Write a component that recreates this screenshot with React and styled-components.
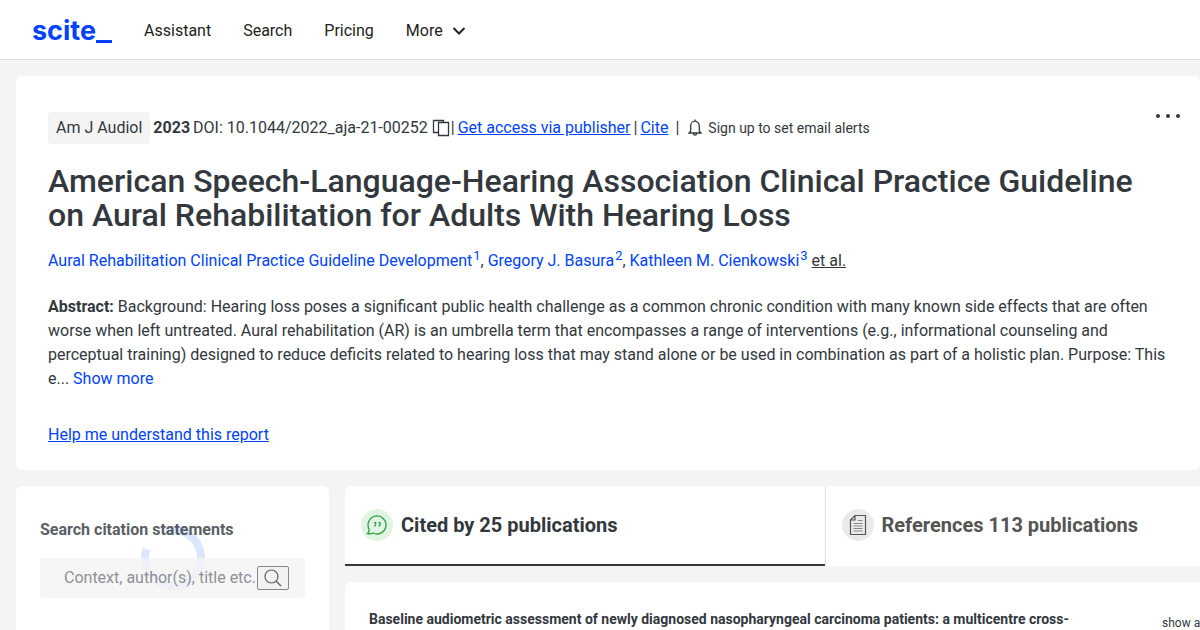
import styled, { createGlobalStyle } from "styled-components"

const GlobalStyle = createGlobalStyle`
    * { box-sizing: border-box; }
    body {
        margin: 0;
        background: #f4f4f4;
        color: #32383e;
        font: 16px/24px Roboto, "Liberation Sans", sans-serif;
        overflow-x: hidden;
    }
    button, input { font: inherit; color: inherit; }
`

const Header = styled.header`
    display: flex;
    align-items: center;
    gap: 32px;
    height: 60px;
    padding: 2px 32px 0;
    background: #fff;
    border-bottom: 1px solid #d9d9d9;
`

const Logo = styled.a`
    display: flex;
    align-items: flex-end;
    color: #0043ff;
    font: 700 27px/32px Inter, sans-serif;
    text-decoration: none;
`

const LogoBar = styled.span`
    width: 16px;
    height: 3px;
    margin-bottom: 4px;
    background: #0043ff;
`

const Nav = styled.nav`
    display: flex;
    gap: 32px;
    color: #222;
`

const NavLink = styled.a`
    color: inherit;
    text-decoration: none;
`

const MoreButton = styled.button`
    display: flex;
    align-items: center;
    gap: 9px;
    padding: 0;
    border: 0;
    background: none;
`

const Main = styled.main`
    display: flex;
    flex-direction: column;
    gap: 16px;
    padding: 16px 0 0 16px;
`

const Card = styled.section`
    background: #fff;
    border-radius: 6px;
`

const Article = styled(Card)`
    padding: 36px 32px 23px;
`

const TopRow = styled.div`
    display: flex;
    align-items: flex-start;
    justify-content: space-between;
`

const Meta = styled.div`
    display: flex;
    align-items: center;
    gap: 3px;
    white-space: nowrap;
`

const Journal = styled.span`
    padding: 4px 8px;
    border-radius: 4px;
    background: #f4f4f4;
`

const Link = styled.a`
    color: #0043ff;
    text-decoration: ${(props) => (props.$plain ? "none" : "underline")};
`

const IconButton = styled.button`
    display: flex;
    align-items: center;
    padding: 0;
    border: 0;
    background: none;
`

const CopyButton = styled(IconButton)`
    margin-left: 1px;
    margin-right: -2px;
`

const AlertButton = styled(IconButton)`
    gap: 6px;
    margin-left: 6px;
    font-size: 14px;
`

const Dots = styled(IconButton)`
    margin-right: -12px;
    height: 8px;
`

const Title = styled.h1`
    margin: 20px 0 17px;
    font-size: 32px;
    line-height: 34px;
    font-weight: 500;
`

const Authors = styled.p`
    margin: 0;
    & sup {
        margin-left: 1px;
        font-size: 13px;
        line-height: 0;
        vertical-align: 6px;
    }
`

const EtAl = styled.a`
    color: inherit;
`

const Abstract = styled.p`
    margin: 22px 0 32px;
`

const Columns = styled.div`
    display: flex;
    gap: 16px;
    align-items: flex-start;
`

const Sidebar = styled(Card)`
    position: relative;
    flex: 0 0 313px;
    min-width: 0;
    padding: 32px 24px;
    min-height: 320px;
`

const Spinner = styled.svg`
    position: absolute;
    top: 40px;
    left: calc(50% - 32px);
`

const SearchForm = styled.form`
    position: relative;
    opacity: 0.8;
`

const SearchLabel = styled.label`
    display: block;
    margin-bottom: 16px;
    font-weight: 700;
`

const SearchBox = styled.div`
    display: flex;
    align-items: center;
    height: 40px;
    padding: 0 16px 0 24px;
    border-radius: 4px;
    background: #f4f4f4;
`

const SearchInput = styled.input`
    flex: 1;
    min-width: 0;
    padding: 0;
    border: 0;
    outline: 0;
    background: none;
    &::placeholder {
        color: #75757f;
        opacity: 1;
    }
`

const SearchButton = styled.button`
    display: flex;
    align-items: center;
    justify-content: center;
    width: 32px;
    height: 24px;
    padding: 0;
    border: 1px solid #6b6b6b;
    border-radius: 2px;
    background: #efefef;
`

const Results = styled.div`
    flex: 0 0 80vw;
    display: flex;
    flex-direction: column;
    gap: 16px;
`

const Tabs = styled.div`
    display: flex;
    background: #fff;
    border-radius: 6px 6px 0 0;
`

const Tab = styled.button`
    flex: 1 1 0;
    display: flex;
    align-items: center;
    gap: 8px;
    height: 80px;
    padding: 0 16px;
    border: 0;
    border-left: ${(props) => (props.$active ? "0" : "1px solid #dedede")};
    border-bottom: 2px solid ${(props) => (props.$active ? "#32383e" : "transparent")};
    background: none;
    color: ${(props) => (props.$active ? "#32383e" : "#555")};
    font-size: 20px;
    font-weight: 700;
`

const Badge = styled.span`
    display: flex;
    align-items: center;
    justify-content: center;
    width: 32px;
    height: 32px;
    border-radius: 50%;
    background: ${(props) => props.$color};
`

const Result = styled(Card)`
    display: flex;
    gap: 88px;
    padding: 25px 24px;
`

const ResultTitle = styled.h2`
    flex: 0 0 705px;
    margin: 0;
    font-size: 14px;
    line-height: 24px;
    font-weight: 700;
`

const ShowAbstract = styled(IconButton)`
    height: 32px;
    font-size: 12px;
    white-space: nowrap;
`

const Chevron = () => (
    <svg width="14" height="8" viewBox="0 0 14 8" fill="none" stroke="#222" strokeWidth="2">
        <path d="M1.5 1 7 6.5 12.5 1" />
    </svg>
)

const CopyIcon = () => (
    <svg width="18" height="18" viewBox="0 0 18 18" fill="none" stroke="currentColor" strokeWidth="1.3">
        <path d="M6.5 13.5H1.5V1.5H11.5V4M6.5 3.5H16.5V16.5H6.5Z" />
    </svg>
)

const BellIcon = () => (
    <svg width="14" height="18" viewBox="0 0 14 18" fill="none" stroke="currentColor" strokeWidth="1.3">
        <path d="M7 .5V2M2.7 12V7a4.3 4.8 0 0 1 8.6 0v5l1.7 2H1Z M5.5 14.5a1.5 1.7 0 0 0 3 0" />
    </svg>
)

const SearchIcon = () => (
    <svg width="18" height="18" viewBox="0 0 18 18" fill="none" stroke="#32383e" strokeWidth="1.2">
        <circle cx="7.5" cy="7.5" r="6.5" />
        <path d="m12 12 5 5" />
    </svg>
)

const QuoteIcon = () => (
    <svg width="22" height="22" viewBox="0 0 22 22" fill="none" stroke="#2f9e44" strokeWidth="1.3">
        <path d="M3.2 15.4A9 9 0 1 1 7 19Q4.500 20.300 1.500 19.500 3.200 18 3.200 15.400Z" />
        <path d="M8 8.600h1.600v1.700L8.600 12.500M12.400 8.600H14v1.700L13 12.500" />
    </svg>
)

const PaperIcon = () => (
    <svg width="18" height="22" viewBox="0 0 18 22" fill="none" stroke="#555" strokeWidth="1.2">
        <path d="M6 1.5H16.5V20.5H1.5V6ZM6 1.5V6H1.5" />
        <path stroke="#888" d="M9 6.5h4.500M4.500 9.500h9M4.500 12h9M4.500 14.500h9M4.500 17h9" />
    </svg>
)

const App = () => {
    return (
        <>
        <GlobalStyle />
        <Header>
            <Logo href="#" aria-label="scite_">scite<LogoBar /></Logo>
            <Nav>
                <NavLink href="#">Assistant</NavLink>
                <NavLink href="#">Search</NavLink>
                <NavLink href="#">Pricing</NavLink>
                <MoreButton>More <Chevron /></MoreButton>
            </Nav>
        </Header>
        <Main>
            <Article>
                <TopRow>
                    <Meta>
                        <Journal>Am J Audiol</Journal>
                        <strong>2023</strong>
                        <span>DOI: 10.1044/2022_aja-21-00252</span>
                        <CopyButton aria-label="Copy DOI"><CopyIcon /></CopyButton>
                        <span>|</span>
                        <Link href="#">Get access via publisher</Link>
                        <span>|</span>
                        <Link href="#">Cite</Link>
                        <span>&nbsp;|</span>
                        <AlertButton><BellIcon /> Sign up to set email alerts</AlertButton>
                    </Meta>
                    <Dots aria-label="More actions">
                        <svg width="24" height="4" viewBox="0 0 24 4" fill="currentColor">
                            <circle cx="2" cy="2" r="2" />
                            <circle cx="12" cy="2" r="2" />
                            <circle cx="22" cy="2" r="2" />
                        </svg>
                    </Dots>
                </TopRow>
                <Title>American Speech-Language-Hearing Association Clinical Practice Guideline on Aural Rehabilitation for Adults With Hearing Loss</Title>
                <Authors>
                    <Link $plain href="#">Aural Rehabilitation Clinical Practice Guideline Development<sup>1</sup></Link>,{" "}
                    <Link $plain href="#">Gregory J. Basura<sup>2</sup></Link>,{" "}
                    <Link $plain href="#">Kathleen M. Cienkowski<sup>3</sup></Link>{" "}
                    <EtAl href="#">et al.</EtAl>
                </Authors>
                <Abstract>
                    <strong>Abstract:</strong> Background: Hearing loss poses a significant public health challenge as a common chronic condition with many known side effects that are often worse when left untreated. Aural rehabilitation (AR) is an umbrella term that encompasses a range of interventions (e.g., informational counseling and perceptual training) designed to reduce deficits related to hearing loss that may stand alone or be used in combination as part of a holistic plan. Purpose: This e... <Link $plain href="#">Show more</Link>
                </Abstract>
                <Link href="#">Help me understand this report</Link>
            </Article>
            <Columns>
                <Sidebar>
                    <Spinner width="64" height="64" viewBox="0 0 64 64" fill="none" stroke="#dbe7ff" strokeWidth="8">
                        <path d="M5.4 23.3A28 28 0 1 0 25 4.9" />
                    </Spinner>
                    <SearchForm>
                        <SearchLabel htmlFor="search">Search citation statements</SearchLabel>
                        <SearchBox>
                            <SearchInput id="search" placeholder="Context, author(s), title etc." />
                            <SearchButton type="button" aria-label="Search"><SearchIcon /></SearchButton>
                        </SearchBox>
                    </SearchForm>
                </Sidebar>
                <Results>
                    <Tabs>
                        <Tab $active><Badge $color="#dff5e1"><QuoteIcon /></Badge>Cited by 25 publications</Tab>
                        <Tab><Badge $color="#eaeaea"><PaperIcon /></Badge>References 113 publications</Tab>
                    </Tabs>
                    <Result>
                        <ResultTitle>Baseline audiometric assessment of newly diagnosed nasopharyngeal carcinoma patients: a multicentre cross-sectional study</ResultTitle>
                        <ShowAbstract>show abstract</ShowAbstract>
                    </Result>
                </Results>
            </Columns>
        </Main>
        </>
    )
}

export default App
